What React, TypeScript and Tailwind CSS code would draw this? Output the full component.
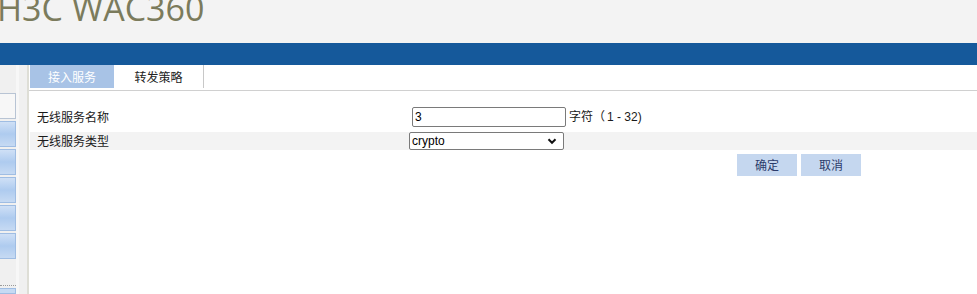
import React from "react";

const cjk = { fontFamily: '"Microsoft YaHei", "Noto Sans CJK SC", "Noto Sans", sans-serif' };

function SideBtn({ blue }: { blue?: boolean }) {
  return (
    <div
      className={
        "h-[26px] w-[16px] border border-l-0 " +
        (blue
          ? "border-[#9fbde3] bg-gradient-to-b from-[#cfe0f6] via-[#aecbef] to-[#c6daf3]"
          : "border-[#b8c4d4] bg-[#f7f7f7]")
      }
    />
  );
}

export default function App() {
  return (
    <div className="w-[977px] h-[294px] overflow-hidden bg-white" style={cjk}>
      {/* header */}
      <div className="h-[43px] bg-[#f3f3f3] overflow-hidden relative">
        <div
          className="absolute left-[-3px] top-[-14px] text-[34px] leading-[44px] text-[#7b7b5c]"
          style={{ fontFamily: '"Open Sans", "Noto Sans", sans-serif' }}
        >
          H3C WAC360
        </div>
      </div>
      <div className="h-[22px] bg-[#15599b]" />
      <div className="flex h-[229px]">
        {/* sidebar */}
        <div className="w-[27px] bg-[#f0f0f0] flex">
          <div className="w-[16px] flex flex-col">
            <div className="h-[28px]" />
            <div className="flex flex-col gap-[2px]">
              <SideBtn />
              <SideBtn blue />
              <SideBtn blue />
              <SideBtn blue />
              <SideBtn blue />
              <SideBtn blue />
            </div>
            <div className="mt-[26px] border-t border-dotted border-[#9a9a9a]" />
            <div className="mt-[2px] flex-1 border border-l-0 border-[#9fbde3] bg-[#c6daf3]" />
          </div>
          <div className="w-[3px] bg-[#f7f7f7]" />
        </div>
        <div className="w-[2px] bg-[#deded6]" />
        {/* content */}
        <div className="flex-1 flex flex-col">
          <div className="h-[26px] flex items-stretch border-b border-[#d0d0d0]">
            <div className="ml-[1px] w-[84px] h-[23px] bg-[#a8c3e6] text-white text-[12px] flex items-center justify-center">
              接入服务
            </div>
            <div className="w-[90px] h-[23px] border-r border-[#c8c8c8] text-[#222] text-[12px] flex items-center justify-center">
              转发策略
            </div>
          </div>
          <div className="h-[15px]" />
          {/* row 1 */}
          <div className="h-[21px] flex items-center text-[12px] text-[#1a1a1a]">
            <div className="w-[383px] pl-[8px]">无线服务名称</div>
            <div className="w-[154px] h-[20px] border border-[#7a7a7a] rounded-[2px] flex items-center px-[2px] text-[12px] text-black"
              style={{ fontFamily: '"Liberation Sans", Arial, sans-serif' }}>
              3
            </div>
            <div className="ml-[3px]">字符（<span className="ml-[2px]" style={{ fontFamily: '"Liberation Sans", Arial, sans-serif' }}>1 - 32)</span></div>
          </div>
          <div className="h-[5px]" />
          {/* row 2 */}
          <div className="h-[18px] flex items-center bg-[#f3f3f3] text-[12px] text-[#1a1a1a] ml-[1px]">
            <div className="w-[379px] pl-[7px]">无线服务类型</div>
            <div
              className="w-[155px] h-[18px] border border-[#7a7a7a] rounded-[2px] bg-white flex items-center justify-between px-[2px] text-[12px] text-black"
              style={{ fontFamily: '"Liberation Sans", Arial, sans-serif' }}
            >
              <span>crypto</span>
              <svg width="12" height="12" viewBox="0 0 12 12" className="mr-[3px]">
                <path d="M2.5 4.2 L6 7.8 L9.5 4.2" fill="none" stroke="#111" strokeWidth="2" />
              </svg>
            </div>
          </div>
          <div className="h-[4px]" />
          {/* buttons */}
          <div className="flex gap-[4px] pl-[708px]">
            <div className="w-[60px] h-[22px] bg-[#c5d7ef] text-[#2b3b6b] text-[12px] flex items-center justify-center">确定</div>
            <div className="w-[60px] h-[22px] bg-[#c5d7ef] text-[#2b3b6b] text-[12px] flex items-center justify-center">取消</div>
          </div>
        </div>
      </div>
    </div>
  );
}
